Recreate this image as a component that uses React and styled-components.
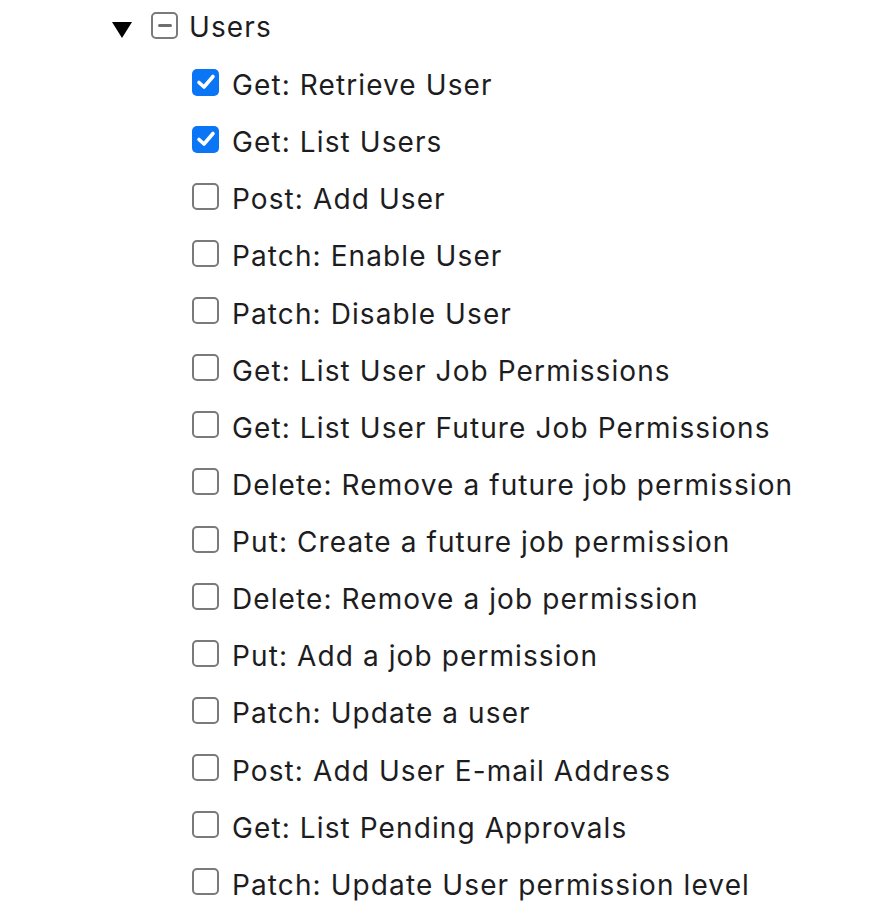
import React from "react";
import styled, { createGlobalStyle } from "styled-components";

const Global = createGlobalStyle`
  html, body { margin: 0; padding: 0; background: #fff; }
  body { font-family: Inter, "Noto Sans", sans-serif; color: #1d1d1f; }
`;

const Tree = styled.div`
  padding-left: 112px;
`;

const Summary = styled.div`
  display: flex;
  align-items: center;
  height: 54px;
`;

const Caret = styled.svg`
  width: 20px;
  height: 16px;
  margin-top: 5px;
  flex: none;
`;

const Box = styled.span`
  box-sizing: border-box;
  width: 27px;
  height: 27px;
  flex: none;
  border-radius: 5px;
  display: flex;
  align-items: center;
  justify-content: center;
  margin-top: -6px;
  border: ${(p) => (p.$checked ? "none" : "2px solid #7a7a7a")};
  background: ${(p) => (p.$checked ? "#0a75f5" : "#fff")};
`;

const Dash = styled.span`
  width: 14px;
  height: 3px;
  border-radius: 1.5px;
  background: #6e6e6e;
`;

const GroupBox = styled(Box)`
  margin-left: 19px;
  margin-top: -3px;
`;

const Label = styled.span`
  font-size: 28px;
  line-height: 1;
  letter-spacing: 1.1px;
`;

const GroupLabel = styled(Label)`
  margin-left: 11px;
`;

const List = styled.ul`
  list-style: none;
  margin: 2.5px 0 0;
  padding: 0 0 0 80px;
`;

const Row = styled.li`
  display: flex;
  align-items: center;
  height: 57.14px;
  gap: 13px;
`;

const items = [
  ["Get: Retrieve User", true],
  ["Get: List Users", true],
  ["Post: Add User", false],
  ["Patch: Enable User", false],
  ["Patch: Disable User", false],
  ["Get: List User Job Permissions", false],
  ["Get: List User Future Job Permissions", false],
  ["Delete: Remove a future job permission", false],
  ["Put: Create a future job permission", false],
  ["Delete: Remove a job permission", false],
  ["Put: Add a job permission", false],
  ["Patch: Update a user", false],
  ["Post: Add User E-mail Address", false],
  ["Get: List Pending Approvals", false],
  ["Patch: Update User permission level", false],
];

function Check({ checked }) {
  return (
    <Box $checked={checked}>
      {checked && (
        <svg width="20" height="18" viewBox="0 0 20 18">
          <path d="M3 9.5 L8 14 L17 3.5" fill="none" stroke="#fff" strokeWidth="3.6" strokeLinecap="round" strokeLinejoin="round" />
        </svg>
      )}
    </Box>
  );
}

export default function App() {
  return (
    <>
      <Global />
      <Tree>
        <Summary>
          <Caret viewBox="0 0 20 16">
            <path d="M0 0 H20 L10 16 Z" fill="#000" />
          </Caret>
          <GroupBox>
            <Dash />
          </GroupBox>
          <GroupLabel>Users</GroupLabel>
        </Summary>
        <List>
          {items.map(([t, c]) => (
            <Row key={t}>
              <Check checked={c} />
              <Label>{t}</Label>
            </Row>
          ))}
        </List>
      </Tree>
    </>
  );
}
